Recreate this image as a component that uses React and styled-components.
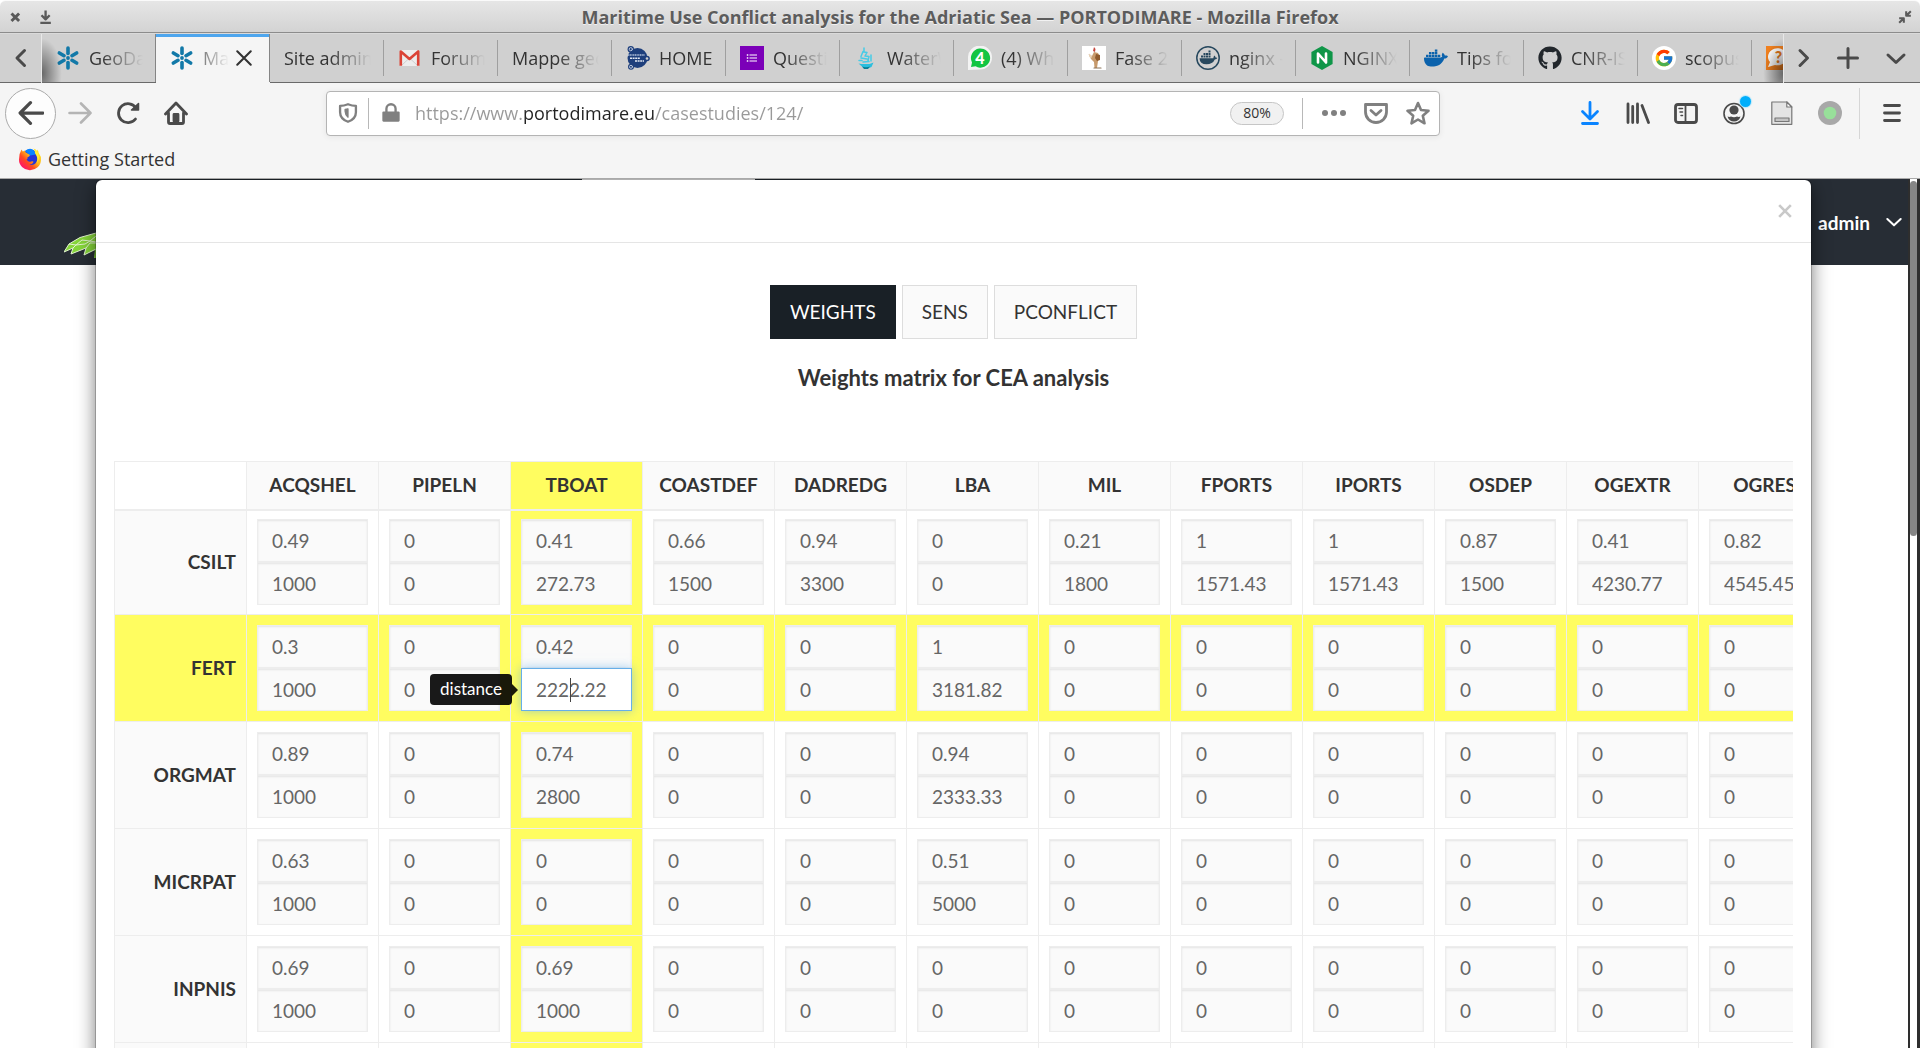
import React from "react";
import styled, { createGlobalStyle, css } from "styled-components";
import { FaGithub } from "react-icons/fa";
import { FcGoogle } from "react-icons/fc";
import { SiDocker } from "react-icons/si";

const ui = `"Open Sans", "Noto Sans", sans-serif`;
const lato = `Lato, "Noto Sans", sans-serif`;
const line = "#ededed";
const yellow = "#fffd60";

const GlobalStyle = createGlobalStyle`
  *, *::before, *::after { box-sizing: border-box; }
  body { margin: 0; background: #fff; overflow: hidden; }
  button, input { font: inherit; color: inherit; margin: 0; }
  svg { display: block; flex: none; }
`;

const Window = styled.div`
  height: 100vh;
  display: flex;
  flex-direction: column;
  font-family: ${ui};
  font-size: 18px;
  color: #333;
`;

/* ---------- title bar ---------- */
const TitleBar = styled.header`
  height: 33px;
  flex: none;
  display: flex;
  align-items: center;
  padding: 0 8px;
  background: linear-gradient(#e6e6e6, #d3d3d3);
  border-top: 1px solid #fafafa;
  border-bottom: 1px solid #8c8c8c;
  border-radius: 6px 6px 0 0;
`;
const WindowButtons = styled.div`
  flex: 1;
  display: flex;
  gap: 16px;
  justify-content: ${(p) => (p.$end ? "flex-end" : "flex-start")};
`;
const WindowTitle = styled.h1`
  margin: 0;
  font-size: 18px;
  line-height: 24px;
  font-weight: 700;
  color: #5c5c5c;
  text-shadow: 0 1px 0 #f2f2f2;
`;
const PlainButton = styled.button`
  padding: 0;
  border: 0;
  background: none;
  display: flex;
  align-items: center;
  justify-content: center;
`;

/* ---------- tabs ---------- */
const TabRow = styled.div`
  height: 50px;
  flex: none;
  display: flex;
  background: #d0d0d0;
  border-top: 1px solid #dadada;
`;
const StripButton = styled(PlainButton)`
  width: ${(p) => p.$width}px;
  border-bottom: 1px solid #6a6a6a;
  color: #4a4a4a;
`;
const TabStrip = styled.div`
  flex: 1;
  min-width: 0;
  display: flex;
  overflow: hidden;
  position: relative;
  border-left: 1px solid #e8e8e8;
  border-right: 1px solid #e8e8e8;
  &::before, &::after {
    content: "";
    position: absolute;
    z-index: 1;
    top: 4px;
    bottom: 1px;
    width: 20px;
    pointer-events: none;
  }
  &::before { left: 0; background: radial-gradient(ellipse at 0 80%, rgba(0,0,0,.5), transparent 70%); }
  &::after { right: 0; background: radial-gradient(ellipse at 100% 80%, rgba(0,0,0,.5), transparent 70%); }
`;
const TabItem = styled.div`
  width: 114px;
  flex: none;
  display: flex;
  align-items: center;
  border-bottom: 1px solid #6a6a6a;
  ${(p) => p.$active && css`
    background: #f5f5f5;
    border-bottom-color: #f5f5f5;
    box-shadow: inset 0 3px 0 #4ea6ee;
  `}
`;
const TabButton = styled(PlainButton)`
  flex: 1;
  min-width: 0;
  height: 100%;
  padding-left: 14px;
  margin-right: ${(p) => (p.$active ? 6 : 12)}px;
  gap: 9px;
  justify-content: flex-start;
  overflow: hidden;
`;
const TabLabel = styled.span`
  flex: 1;
  min-width: 0;
  overflow: hidden;
  white-space: nowrap;
  text-align: left;
  line-height: 24px;
  mask-image: linear-gradient(to left, transparent, #000 ${(p) => (p.$fade ? 42 : 0)}px);
`;
const TabClose = styled(PlainButton)`
  width: 18px;
  margin-right: 16px;
  color: #333;
`;
const TabEdge = styled.i`
  width: 1px;
  flex: none;
  height: ${(p) => (p.$full ? "100%" : "36px")};
  background: ${(p) => (p.$full ? "#858585" : "#9f9f9f")};
`;

/* ---------- toolbar ---------- */
const Toolbar = styled.nav`
  height: 60px;
  flex: none;
  display: flex;
  align-items: center;
  padding: 0 4px 0 5px;
  background: #f5f5f5;
`;
const BackButton = styled(PlainButton)`
  width: 51px;
  height: 51px;
  flex: none;
  background: #fdfdfd;
  border: 1px solid #ababab;
  border-radius: 50%;
  color: #4a4a4a;
`;
const ToolButton = styled(PlainButton)`
  position: relative;
  width: 48px;
  height: 48px;
  flex: none;
  color: ${(p) => p.$color || "#4a4a4a"};
`;
const Spacer = styled.div`
  flex: 0 1 126px;
`;
const UrlBar = styled.div`
  flex: 1;
  min-width: 0;
  height: 45px;
  display: flex;
  align-items: center;
  padding: 0 9px 0 11px;
  background: #fff;
  border: 1px solid #b4b4b4;
  border-radius: 4px;
  box-shadow: 0 1px 6px rgba(0, 0, 0, 0.07);
  color: #808080;
`;
const UrlRule = styled.i`
  width: 1px;
  height: 31px;
  background: #b8b8b8;
  margin: 0 ${(p) => p.$after}px 0 ${(p) => p.$before}px;
`;
/* The host name is darker than the scheme and the path. */
const UrlInput = styled.input`
  flex: 1;
  min-width: 0;
  height: 32px;
  padding: 0;
  margin-left: 14px;
  border: 0;
  outline: 0;
  background: linear-gradient(to right, #999 0 108px, #222 108px 239px, #999 239px);
  background-clip: text;
  -webkit-background-clip: text;
  -webkit-text-fill-color: transparent;
`;
const ZoomPill = styled.button`
  width: 54px;
  height: 23px;
  padding: 0;
  font-size: 14px;
  line-height: 20px;
  color: #333;
  background: #f1f1f1;
  border: 1px solid #c6c6c6;
  border-radius: 12px;
`;
const UrlActions = styled.div`
  display: flex;
  gap: 18px;
`;
const ToolRule = styled.i`
  width: 1px;
  height: 51px;
  background: #d6d6d6;
  margin: 0 8px 0 5px;
`;
const Badge = styled.i`
  position: absolute;
  left: 30px;
  top: 7px;
  width: 11px;
  height: 11px;
  border-radius: 50%;
  background: #00aefb;
  box-shadow: 0 0 1px 1px #b5e6fb;
`;
const BookmarkBar = styled.div`
  height: 36px;
  flex: none;
  display: flex;
  align-items: center;
  padding: 0 18px 3px;
  background: #f5f5f5;
  border-bottom: 1px solid #a9a9a9;
`;
const Bookmark = styled.a`
  display: flex;
  align-items: center;
  gap: 6px;
  color: #333;
  text-decoration: none;
  line-height: 24px;
`;

/* ---------- page ---------- */
const Viewport = styled.main`
  flex: 1;
  min-height: 0;
  display: flex;
  font-family: ${lato};
  font-size: 19px;
`;
const Page = styled.div`
  flex: 1;
  min-width: 0;
  position: relative;
  overflow: hidden;
  background: #fff;
`;
const SiteBar = styled.div`
  height: 86px;
  display: flex;
  justify-content: space-between;
  background: #272d35;
  color: #fff;
`;
const SiteLogo = styled.a`
  padding: 53px 0 0 64px;
`;
const SiteField = styled.div`
  height: 1px;
  width: 173px;
  margin-left: 470px;
  margin-right: auto;
  background: #fff;
`;
const UserMenu = styled(PlainButton)`
  gap: 16px;
  padding-right: 6px;
  font-weight: 700;
`;
const ScrollTrack = styled.div`
  width: 12px;
  border: solid #2e2e2e;
  border-width: 0 3px 0 2px;
  background: #fff;
  padding-top: 2px;
`;
const ScrollThumb = styled.div`
  height: 41%;
  border-radius: 4px;
  background: #858585;
`;
const Modal = styled.section`
  position: absolute;
  top: 0;
  left: 95px;
  right: 96px;
  min-height: 100%;
  border: 1px solid rgba(0, 0, 0, 0.2);
  border-radius: 7px;
  background: #fff;
  background-clip: padding-box;
  box-shadow: 0 6px 18px rgba(0, 0, 0, 0.5);
`;
const ModalHeader = styled.div`
  height: 63px;
  display: flex;
  justify-content: flex-end;
  align-items: center;
  padding: 0 19px 0 0;
  border-bottom: 1px solid #e5e5e5;
`;
const CloseButton = styled(PlainButton)`
  width: 14px;
  height: 24px;
  color: #c9c9c9;
`;
const ModalBody = styled.div`
  padding: 42px 18px 0;
`;
const Switcher = styled.div`
  display: flex;
  justify-content: center;
  gap: 6px;
`;
const SwitchButton = styled.button`
  height: 54px;
  padding: 0 19px;
  line-height: 24px;
  background: ${(p) => (p.$active ? "#192026" : "#fafafa")};
  color: ${(p) => (p.$active ? "#fff" : "#333")};
  border: 1px solid ${(p) => (p.$active ? "#192026" : "#ddd")};
`;
const MatrixTitle = styled.h2`
  margin: 25px 0 70px;
  font-size: 22px;
  line-height: 27px;
  font-weight: 700;
  text-align: center;
`;
const TableScroller = styled.div`
  overflow: hidden;
`;
const Matrix = styled.table`
  width: 1717px;
  table-layout: fixed;
  border-collapse: collapse;
`;
const ColHead = styled.th`
  height: 48px;
  padding: 0 0 1px;
  border: 1px solid ${line};
  border-bottom-width: 2px;
  background: ${(p) => (p.$lit ? yellow : p.$blank ? "#fff" : "#fafafa")};
`;
const RowHead = styled.th`
  padding: 0 10px 1px;
  border: 1px solid ${line};
  text-align: right;
  background: ${(p) => (p.$lit ? yellow : "#fafafa")};
`;
const Cell = styled.td`
  height: 107px;
  padding: 0 10px;
  border: 1px solid ${line};
  background: ${(p) => (p.$lit ? yellow : "#fff")};
  tr:first-child > & { height: 105px; }
`;
const Pair = styled.div`
  position: relative;
  display: flex;
  flex-direction: column;
`;
const ValueInput = styled.input`
  width: 100%;
  height: 43px;
  padding: 0 14px;
  line-height: 24px;
  color: #666;
  background: #fafafa;
  border: 1px solid ${line};
  border-radius: 0;
  outline: 0;
  box-shadow: inset 0 1px 2px rgba(0, 0, 0, 0.09);
  ${(p) => p.$focused && css`
    position: relative;
    background: #fff;
    border-color: #66afe9;
    box-shadow: 0 0 10px rgba(102, 175, 233, 0.6);
  `}
`;
const Caret = styled.i`
  position: absolute;
  left: 49px;
  top: 53px;
  width: 1px;
  height: 24px;
  background: #444;
`;
const Tooltip = styled.div`
  position: absolute;
  right: 120px;
  top: 49px;
  height: 31px;
  padding: 0 10px;
  border-radius: 4px;
  background: rgba(0, 0, 0, 0.9);
  color: #fff;
  font-size: 17px;
  line-height: 30px;
  &::after {
    content: "";
    position: absolute;
    left: 100%;
    top: 10px;
    border: solid transparent;
    border-width: 6px 0 6px 6px;
    border-left-color: rgba(0, 0, 0, 0.9);
  }
`;

/* ---------- drawings ---------- */
const Icon = ({ size = 24, w = 3, children, ...rest }) => (
  <svg width={size} height={size} viewBox="0 0 24 24" fill="none" stroke="currentColor"
    strokeWidth={w} strokeLinecap="round" strokeLinejoin="round" aria-hidden="true" {...rest}>
    {children}
  </svg>
);

const Snow = () => (
  <Icon w="3.6" stroke="#1279a8">
    {[0, 60, 120, 180, 240, 300].map((a) => (
      <path key={a} d="M12 2V7.4" transform={`rotate(${a} 12 12)`} />
    ))}
    <circle cx="12" cy="12" r="1.9" fill="#1279a8" stroke="none" />
  </Icon>
);
const Gmail = () => (
  <Icon stroke="none">
    <path d="M2 4h19v16H2z" fill="#ededed" />
    <path d="M4 19l7.500-7 7.500 7" stroke="#cfcfcf" strokeWidth="1" />
    <path d="M2.800 19.800V5.500L11.500 13l8.700-7.500v14.300" stroke="#db4437" strokeWidth="2.600" strokeLinecap="butt" />
  </Icon>
);
const Globe = () => (
  <Icon stroke="none">
    <circle cx="11.500" cy="12" r="10" fill="#1e3f7c" />
    <circle cx="4.800" cy="3.200" r="3.200" fill="#1e3f7c" />
    <circle cx="4.800" cy="3.200" r="1.600" stroke="#b9c4d8" strokeWidth="1" />
    <circle cx="21" cy="12.500" r="2.800" fill="#1e3f7c" />
    <circle cx="21" cy="12.500" r="1.300" fill="#d0d0d0" />
    <circle cx="5" cy="20.800" r="3" fill="#1e3f7c" />
    <circle cx="5" cy="20.800" r="1.500" stroke="#b9c4d8" strokeWidth="1" />
    <path d="M2 9h17" stroke="#8ea2c4" strokeWidth="2.200" strokeDasharray="1.200 .5" strokeLinecap="butt" />
    <path d="M4 12.200h10M9 15h9" stroke="#e4eaf4" strokeWidth="1.400" strokeDasharray="2 .6" strokeLinecap="butt" />
  </Icon>
);
const FormIcon = () => (
  <Icon stroke="none">
    <path d="M0 0h24v24H0z" fill="#7b00b8" />
    <path d="M9.500 9h7.500M9.500 12h7.500M9.500 15h7.500" stroke="#fff" strokeWidth="1.200" strokeLinecap="butt" />
    <path d="M6.800 9h1.500M6.800 12h1.500M6.800 15h1.500" stroke="#fff" strokeWidth="1.400" strokeLinecap="butt" />
  </Icon>
);
const Ship = () => (
  <Icon stroke="none">
    <path d="M4.500 17.500l3 .500h8l4-1.500-2 4.500q-5 2.500-9 0z" fill="#2bbfde" />
    <path d="M8 20.500q4 1.500 8 0l-2 2.500h-4z" fill="#0a7f97" />
    <path d="M10 2v4M9 5.500l-2 5M10 6l3 .500-2 3.500 4 .500-1 4M7 12l6 1M9 16l6-.500M17 9v6M5 14.500h3" stroke="#45cbe6" strokeWidth="1.500" />
  </Icon>
);
const Whats = () => (
  <Icon stroke="none">
    <path d="M0 24V12a12 12 0 1 1 12 11.500z" fill="#f3f3f3" />
    <path d="M3 21l1-4.500a9.600 9.600 0 1 1 3.600 3.800z" fill="#12c542" />
    <text x="12" y="18" fill="#fff" fontFamily="Lato, sans-serif" fontWeight="900" fontSize="16" textAnchor="middle">4</text>
  </Icon>
);
const Fase = () => (
  <Icon stroke="none">
    <path d="M0 0h24v24H0z" fill="#fff" />
    <path d="M12 1l1.500 2-.500 3-2-1z" fill="#c4453c" />
    <path d="M12 6l4 1 2 4-2 4-1 7h-2.500l-.500-6-3-3-2.500-5 3.500 2z" fill="#c79a6c" />
    <path d="M14 8l4 1v5l-3 1-2-3z" fill="#8f5a2c" />
    <path d="M7.500 7.500l2.500 3-1 2-2-2z" fill="#e9d5bb" />
    <path d="M12 22h7" stroke="#8b7357" strokeWidth="1.200" />
  </Icon>
);
const DockerRound = () => (
  <Icon stroke="none">
    <circle cx="12" cy="12" r="11.200" stroke="#27485e" strokeWidth="1.500" />
    <path d="M3.500 12.200h13.800q.300-1.900 1.200-2.600 1 .800 1 2 1.200-.200 1.800.300-.600 1.400-2.500 1.500-2.200 4.800-8.300 4.800-6.800 0-7-6z" fill="#27485e" />
    <path d="M5 9.500h2v2H5zM7.500 9.500h2v2h-2zM10 9.500h2v2h-2zM12.500 9.500h2v2h-2zM7.500 7h2v2h-2zM10 7h2v2h-2zM12.500 7h2v2h-2zM12.500 4.600h2v2h-2z" fill="#27485e" />
  </Icon>
);
const Nginx = () => (
  <Icon stroke="none">
    <path d="M12 0l10.600 6v12L12 24 1.400 18V6z" fill="#0f9648" />
    <path d="M8 16.500v-9l8 9v-9" stroke="#fff" strokeWidth="2.600" strokeLinecap="round" />
  </Icon>
);
const Whale = () => <SiDocker size={24} color="#0b62ac" aria-hidden="true" />;
const Github = () => <FaGithub size={24} color="#22272c" aria-hidden="true" />;
const Google = () => (
  <Icon stroke="none">
    <circle cx="12" cy="12" r="12" fill="#fff" />
    <FcGoogle x="2" y="2" size={20} />
  </Icon>
);
const Ask = () => (
  <Icon stroke="none">
    <path d="M0 0h24v24H0z" fill="#f0801f" />
    <path d="M2 21l2-5a9.500 8.500 0 1 1 5 3z" fill="#fff" />
    <text x="12.500" y="16.500" fill="#e8791a" fontFamily="Lato, sans-serif" fontWeight="900" fontSize="16" textAnchor="middle">?</text>
  </Icon>
);
const FirefoxLogo = () => (
  <svg width="24" height="24" viewBox="0 0 24 24" aria-hidden="true">
    <defs>
      <linearGradient id="flame" x1="0.900" y1="0.100" x2="0.100" y2="0.900">
        <stop offset="0" stopColor="#ffe930" />
        <stop offset=".4" stopColor="#ffb31a" />
        <stop offset=".65" stopColor="#ff4a1e" />
        <stop offset="1" stopColor="#ff0a78" />
      </linearGradient>
    </defs>
    <circle cx="12" cy="11" r="8.500" fill="#2434d8" />
    <path d="M7 4q5-4 9-.500l2 4-6 1z" fill="#0a84ff" />
    <path d="M3.500 2.500L4.800 4.500 7 3.500Q6.800 5.500 9.500 6.500L12 8q-.500 2-2.500 2.300Q10 12 8.500 12.500 10.500 15.500 13 14.500q2.500-.500 2.500.500-1 2.500-4 2.800 5 1 7-3Q20.500 11 17.500 7 17 3.500 15.500 1.500 18 2 19 4l.500-1.500q1 1.500 1.200 3.500Q23.500 9.500 23 13A11 10.500 0 0 1 1 12.500Q.8 7 3.500 2.500z" fill="url(#flame)" />
    <path d="M17 6q3.500 4 2 10Q23 10 19 4.500L16.500 2z" fill="#fff03a" />
  </svg>
);
const GreenScales = () => (
  <svg width="48" height="26" viewBox="0 0 48 26" aria-hidden="true">
    <path d="M0 20L5 12 16 5.500 32 1 48 0V26H30L31 18 20 23 22 16 7 22 9 16z" fill="#86d63a" />
    <path d="M0 20L5 12 16 5.500 32 1M0 20l9-4-2 6 15-6-2 7 12-6M5 12l7 1 6-5 8 1 6-5M9 16l3-3 9-1 5-3 6 1M22 16l4-5 6 0" fill="none" stroke="#e2f3cf" strokeWidth="1" />
  </svg>
);

const tabs = [
  { label: "GeoDa", icon: Snow },
  { label: "Ma", icon: Snow, active: true },
  { label: "Site admin" },
  { label: "Forum", icon: Gmail },
  { label: "Mappe geo" },
  { label: "HOME", icon: Globe, short: true },
  { label: "Questi", icon: FormIcon },
  { label: "WaterW", icon: Ship },
  { label: "(4) Wh", icon: Whats },
  { label: "Fase 2", icon: Fase },
  { label: "nginx -", icon: DockerRound },
  { label: "NGINX", icon: Nginx },
  { label: "Tips fo", icon: Whale },
  { label: "CNR-IS", icon: Github },
  { label: "scopus", icon: Google },
  { label: "", icon: Ask },
];

const columns = ["ACQSHEL", "PIPELN", "TBOAT", "COASTDEF", "DADREDG", "LBA", "MIL", "FPORTS", "IPORTS", "OSDEP", "OGEXTR", "OGRES"];
const z = ["0", "0"];
const rows = [
  ["CSILT", [["0.49", "1000"], z, ["0.41", "272.73"], ["0.66", "1500"], ["0.94", "3300"], z, ["0.21", "1800"], ["1", "1571.43"], ["1", "1571.43"], ["0.87", "1500"], ["0.41", "4230.77"], ["0.82", "4545.45"]]],
  ["FERT", [["0.3", "1000"], z, ["0.42", "2222.22"], z, z, ["1", "3181.82"], z, z, z, z, z, z]],
  ["ORGMAT", [["0.89", "1000"], z, ["0.74", "2800"], z, z, ["0.94", "2333.33"], z, z, z, z, z, z]],
  ["MICRPAT", [["0.63", "1000"], z, z, z, z, ["0.51", "5000"], z, z, z, z, z, z]],
  ["INPNIS", [["0.69", "1000"], z, ["0.69", "1000"], z, z, z, z, z, z, z, z, z]],
];
const litRow = "FERT";
const litCol = "TBOAT";

function Tab({ label, icon: Glyph, active, short, beforeActive }) {
  return (
    <TabItem $active={active}>
      <TabButton type="button" role="tab" aria-selected={!!active} aria-label={label || "Question"} $active={active}>
        {Glyph && <Glyph />}
        <TabLabel $fade={!short}>{label}</TabLabel>
      </TabButton>
      {active && (
        <TabClose type="button" aria-label="Close tab">
          <Icon size={18} w="2.800"><path d="M3 3l18 18M21 3L3 21" /></Icon>
        </TabClose>
      )}
      <TabEdge $full={active || beforeActive} />
    </TabItem>
  );
}

function ValuePair({ row, col, values }) {
  const focused = row === litRow && col === litCol;
  return (
    <Pair>
      <ValueInput type="text" aria-label={`${row} ${col} weight`} defaultValue={values[0]} />
      <ValueInput type="text" aria-label={`${row} ${col} distance`} defaultValue={values[1]} $focused={focused} />
      {focused && <Caret />}
      {focused && <Tooltip role="tooltip">distance</Tooltip>}
    </Pair>
  );
}

export default function App() {
  return (
    <Window>
      <GlobalStyle />
      <TitleBar>
        <WindowButtons>
          <PlainButton type="button" aria-label="Close window">
            <Icon size={14} w="5" stroke="#5a5a5a" strokeLinecap="butt"><path d="M6 6l13 13M19 6L6 19" /></Icon>
          </PlainButton>
          <PlainButton type="button" aria-label="Minimise window">
            <Icon size={14} w="4" stroke="#5a5a5a" strokeLinecap="butt"><path d="M13 1v14M6 9l7 7 7-7M4 22h18" /></Icon>
          </PlainButton>
        </WindowButtons>
        <WindowTitle>Maritime Use Conflict analysis for the Adriatic Sea — PORTODIMARE - Mozilla Firefox</WindowTitle>
        <WindowButtons $end>
          <PlainButton type="button" aria-label="Restore window">
            <Icon size={14} w="3.500" stroke="#5a5a5a" strokeLinecap="butt"><path d="M22 2l-8 8M14 2v8h8M2 22l8-8M10 22v-8H2" /></Icon>
          </PlainButton>
        </WindowButtons>
      </TitleBar>

      <TabRow role="tablist">
        <StripButton type="button" aria-label="Scroll tabs left" $width={41}>
          <Icon size={24} w="3"><path d="M15.500 4.500L8 12l7.500 7.500" /></Icon>
        </StripButton>
        <TabStrip>
          {tabs.map((t, i) => (
            <Tab key={i} {...t} beforeActive={tabs[i + 1]?.active} />
          ))}
        </TabStrip>
        <StripButton type="button" aria-label="Scroll tabs right" $width={40}>
          <Icon size={24} w="3"><path d="M8 4.500l7.500 7.500L8 19.500" /></Icon>
        </StripButton>
        <StripButton type="button" aria-label="New tab" $width={48}>
          <Icon size={24} w="3"><path d="M12 2.500v19M2.500 12h19" /></Icon>
        </StripButton>
        <StripButton type="button" aria-label="List all tabs" $width={48}>
          <Icon size={24} w="3"><path d="M4 9l8 7.500L20 9" /></Icon>
        </StripButton>
      </TabRow>

      <Toolbar>
        <BackButton type="button" aria-label="Back">
          <Icon size={26} w="3"><path d="M23 12H2.500M11.500 2.500L2 12l9.500 9.500" /></Icon>
        </BackButton>
        <ToolButton type="button" aria-label="Forward" $color="#b4b4b4">
          <Icon w="2.600"><path d="M1.500 12h21M13 2.500l9.500 9.500-9.500 9.500" /></Icon>
        </ToolButton>
        <ToolButton type="button" aria-label="Reload">
          <Icon w="2.800"><path d="M19.500 18A9.500 9.500 0 1 1 20 7" /><path d="M22.500 2.500V9h-7z" fill="currentColor" strokeWidth="1.500" /></Icon>
        </ToolButton>
        <ToolButton type="button" aria-label="Home">
          <Icon w="2.800"><path d="M1.500 13L12 2l10.500 11M4.500 12v9q0 1.500 1.500 1.500h12q1.500 0 1.500-1.500v-9" /><path d="M10 20v-6.500h4V20z" fill="currentColor" /></Icon>
        </ToolButton>
        <Spacer />
        <UrlBar>
          <Icon size={20} w="2.800">
            <path d="M12 1.500Q17 3.500 21.500 3.500V11q0 8-9.500 11.500Q2.500 19 2.500 11V3.500Q7 3.500 12 1.500z" />
            <path d="M12 7v10Q8.500 14 8.500 10V7.500z" fill="currentColor" strokeWidth="1.500" />
          </Icon>
          <UrlRule $before={10} $after={12} />
          <Icon size={20} w="2.800">
            <path d="M6.500 11V7a5.500 5.500 0 0 1 11 0v4" />
            <path d="M3 11.500h18V21H3z" fill="currentColor" />
          </Icon>
          <UrlInput type="text" aria-label="Address" defaultValue="https://www.portodimare.eu/casestudies/124/" />
          <ZoomPill type="button">80%</ZoomPill>
          <UrlRule $before={18} $after={19} />
          <UrlActions>
            <PlainButton type="button" aria-label="Page actions">
              <Icon stroke="none" fill="currentColor"><circle cx="3" cy="12" r="3" /><circle cx="12" cy="12" r="3" /><circle cx="21" cy="12" r="3" /></Icon>
            </PlainButton>
            <PlainButton type="button" aria-label="Save to Pocket">
              <Icon w="2.800"><path d="M1.500 3.500h21V11a10.500 10.500 0 0 1-21 0z" /><path d="M7 9.500l5 4.500 5-4.500" /></Icon>
            </PlainButton>
            <PlainButton type="button" aria-label="Bookmark this page">
              <Icon w="2.600"><path d="M12 2l3 7 7.500.800-5.700 5 1.700 7.500L12 18.500l-6.500 3.800 1.700-7.500-5.700-5L9 9z" /></Icon>
            </PlainButton>
          </UrlActions>
        </UrlBar>
        <Spacer />
        <ToolButton type="button" aria-label="Downloads" $color="#0a84ff">
          <Icon w="2.800"><path d="M12 1.500v16M4.500 10.500l7.500 7.500 7.500-7.500M4.500 22.500h15" /></Icon>
        </ToolButton>
        <ToolButton type="button" aria-label="Library">
          <Icon w="2.800"><path d="M2 3v18.500M6.700 5.500v16M11.500 3v18.500M16 4.500l6.500 17" /></Icon>
        </ToolButton>
        <ToolButton type="button" aria-label="Sidebars">
          <Icon w="2.800"><rect x="1.500" y="3.500" width="21" height="18" rx="2.500" /><path d="M11.500 4v17" strokeWidth="1.800" /><path d="M5 7.500h3.500M6 11h2.500M7 14.500h1.500" strokeWidth="1.500" /></Icon>
        </ToolButton>
        <ToolButton type="button" aria-label="Account">
          <Icon w="1.600"><circle cx="12" cy="12.500" r="10" /><circle cx="12" cy="9" r="4.600" fill="currentColor" stroke="none" /><path d="M5.500 15.500q2 .800 3.500 0 3 1.500 6 0 1.500.800 3.500 0-1.500 5-6.500 5t-6.500-5z" fill="currentColor" stroke="none" /></Icon>
          <Badge />
        </ToolButton>
        <ToolButton type="button" aria-label="Notes">
          <Icon w="1.200" stroke="#777"><path d="M1.800 1h15l5 5v17.300h-20z" fill="#e4e4e4" /><path d="M16.800 1v5h5z" fill="#fff" /><path d="M5 17h14v3.500H5z" fill="#c4c4c4" /></Icon>
        </ToolButton>
        <ToolButton type="button" aria-label="Status">
          <Icon stroke="none"><circle cx="12" cy="12" r="12" fill="#a8a8a8" /><circle cx="12" cy="12" r="6.300" fill="#98e09a" /></Icon>
        </ToolButton>
        <ToolRule />
        <ToolButton type="button" aria-label="Open menu">
          <Icon w="2.800"><path d="M4.500 4.500h15M4.500 12h15M4.500 19.500h15" /></Icon>
        </ToolButton>
      </Toolbar>

      <BookmarkBar>
        <Bookmark href="#">
          <FirefoxLogo />
          Getting Started
        </Bookmark>
      </BookmarkBar>

      <Viewport>
        <Page>
          <SiteBar>
            <SiteLogo href="#" aria-label="Portodimare home"><GreenScales /></SiteLogo>
            <SiteField />
            <UserMenu type="button">
              admin
              <Icon size={16} w="3"><path d="M2 7.500l10 9.500 10-9.500" /></Icon>
            </UserMenu>
          </SiteBar>
          <Modal role="dialog" aria-label="Weights matrix">
            <ModalHeader>
              <CloseButton type="button" aria-label="Close">
                <Icon size={14} w="4.500" strokeLinecap="butt"><path d="M2 2l20 20M22 2L2 22" /></Icon>
              </CloseButton>
            </ModalHeader>
            <ModalBody>
              <Switcher>
                <SwitchButton type="button" $active>WEIGHTS</SwitchButton>
                <SwitchButton type="button">SENS</SwitchButton>
                <SwitchButton type="button">PCONFLICT</SwitchButton>
              </Switcher>
              <MatrixTitle>Weights matrix for CEA analysis</MatrixTitle>
              <TableScroller>
                <Matrix>
                  <thead>
                    <tr>
                      <ColHead $blank />
                      {columns.map((c) => (
                        <ColHead key={c} scope="col" $lit={c === litCol}>{c}</ColHead>
                      ))}
                    </tr>
                  </thead>
                  <tbody>
                    {rows.map(([name, cells]) => (
                      <tr key={name}>
                        <RowHead scope="row" $lit={name === litRow}>{name}</RowHead>
                        {cells.map((v, i) => (
                          <Cell key={i} $lit={name === litRow || columns[i] === litCol}>
                            <ValuePair row={name} col={columns[i]} values={v} />
                          </Cell>
                        ))}
                      </tr>
                    ))}
                    <tr>
                      <RowHead />
                      {columns.map((c) => <Cell key={c} $lit={c === litCol} />)}
                    </tr>
                  </tbody>
                </Matrix>
              </TableScroller>
            </ModalBody>
          </Modal>
        </Page>
        <ScrollTrack><ScrollThumb /></ScrollTrack>
      </Viewport>
    </Window>
  );
}
